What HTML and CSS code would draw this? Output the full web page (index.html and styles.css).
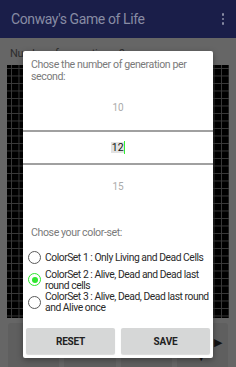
FILE: index.html
```html
<!DOCTYPE html>
<html>
<head>
<meta charset="utf-8">
<link rel="stylesheet" href="styles.css">
</head>
<body>
<div class="screen">
  <header class="appbar">
    <span class="app-title">Conway's Game of Life</span>
    <span class="menu"><i></i><i></i><i></i></span>
  </header>
  <main class="content">
    <div class="gen-label">Number of generations: 0</div>
    <div class="grid"></div>
    <div class="controls">
      <div class="ctrl"></div>
      <div class="ctrl"></div>
      <div class="ctrl"></div>
      <div class="ctrl ctrl-play"><span class="play">&#9654;</span><span class="down">&#9660;</span></div>
    </div>
  </main>

  <div class="dialog">
    <div class="dlg-title">Chose the number of generation per second:</div>
    <div class="picker">
      <div class="pick pick-top">10</div>
      <div class="pick-line"></div>
      <div class="pick pick-mid"><span class="sel">12</span><span class="cursor"></span></div>
      <div class="pick-line"></div>
      <div class="pick pick-bot">15</div>
    </div>
    <div class="dlg-label">Chose your color-set:</div>
    <div class="radios">
      <div class="radio-row"><span class="radio"></span><span class="radio-text">ColorSet 1 : Only Living and Dead Cells</span></div>
      <div class="radio-row"><span class="radio on"></span><span class="radio-text">ColorSet 2 : Alive, Dead and Dead last round cells</span></div>
      <div class="radio-row"><span class="radio"></span><span class="radio-text">ColorSet 3 : Alive, Dead, Dead last round and Alive once</span></div>
    </div>
    <div class="dlg-buttons">
      <button class="btn">RESET</button>
      <button class="btn">SAVE</button>
    </div>
  </div>
</div>
</body>
</html>
```
FILE: styles.css
```css
* { box-sizing: border-box; }
html, body { margin: 0; padding: 0; }
body {
  width: 236px;
  height: 367px;
  overflow: hidden;
  font-family: Roboto, "Liberation Sans", sans-serif;
  background: #666666;
}
.screen {
  position: relative;
  width: 236px;
  height: 367px;
  overflow: hidden;
}
.appbar {
  height: 38px;
  background: #1a1e49;
  display: flex;
  align-items: center;
  justify-content: space-between;
  padding: 0 11px 0 11px;
  box-shadow: 0 1px 2px rgba(0,0,0,0.3);
}
.app-title {
  color: #888ca4;
  font-size: 14px;
  letter-spacing: -0.4px;
}
.menu {
  display: flex;
  flex-direction: column;
  gap: 2px;
  margin-right: 1px;
}
.menu i {
  display: block;
  width: 2.5px;
  height: 2.5px;
  background: #888ca4;
  border-radius: 50%;
}
.content {
  background: #666666;
  padding: 10px 7px 0 7px;
}
.gen-label {
  font-size: 11px;
  letter-spacing: -0.4px;
  color: #2e2e2e;
  padding-left: 3px;
  line-height: 12px;
  height: 17px;
}
.grid {
  width: 222px;
  height: 253px;
  background-color: #000;
  background-image:
    linear-gradient(to right, #3a3a3a 1px, transparent 1px),
    linear-gradient(to bottom, #3a3a3a 1px, transparent 1px);
  background-size: 7.5px 7.5px;
  background-position: 4px 3px;
}
.controls {
  display: flex;
  gap: 5px;
  padding: 5px 1px 0 1px;
}
.ctrl {
  flex: 1;
  height: 48px;
  background: #5f5f5f;
  border-radius: 3px;
  position: relative;
}
.ctrl-play .play {
  position: absolute;
  right: 6px;
  top: 13px;
  color: #111;
  font-size: 11px;
}
.ctrl-play .down {
  position: absolute;
  left: 20px;
  top: 30px;
  color: #111;
  font-size: 9px;
}

/* dialog */
.dialog {
  position: absolute;
  left: 23px;
  top: 51px;
  width: 190px;
  height: 307px;
  background: #ffffff;
  border-radius: 2px;
  box-shadow: 0 2px 6px rgba(0,0,0,0.35);
  padding: 8px 3px 4px 3px;
  display: flex;
  flex-direction: column;
}
.dlg-title {
  font-size: 10.6px;
  letter-spacing: -0.4px;
  line-height: 12px;
  color: #7a7a7a;
  padding: 0 4px 0 5px;
  height: 24px;
}
.picker {
  display: flex;
  flex-direction: column;
  margin: 0 -3px;
}
.pick {
  font-size: 10px;
  line-height: 12px;
  text-align: center;
  color: #ababab;
}
.pick-top {
  height: 47px;
  padding-top: 19px;
}
.pick-line {
  height: 2px;
  background: #a0a0a0;
}
.pick-mid {
  height: 31px;
  display: flex;
  align-items: center;
  justify-content: center;
  color: #111;
  font-size: 10.5px;
}
.sel {
  background: #e2e2e2;
  padding: 0 0 0 1px;
  line-height: 11px;
}
.cursor {
  display: inline-block;
  width: 1.5px;
  height: 13px;
  background: #33ee33;
}
.pick-bot {
  height: 50px;
  padding-top: 16px;
}
.dlg-label {
  font-size: 10.6px;
  letter-spacing: -0.4px;
  line-height: 12px;
  color: #7a7a7a;
  padding-left: 5px;
  margin-top: 12px;
}
.radios {
  display: flex;
  flex-direction: column;
  margin-top: 7px;
}
.radio-row {
  display: flex;
  align-items: center;
  min-height: 22.5px;
  padding-left: 2px;
}
.radio {
  flex: none;
  width: 13px;
  height: 13px;
  border: 1.5px solid #5a5a5a;
  border-radius: 50%;
  margin-right: 4px;
  display: flex;
  align-items: center;
  justify-content: center;
}
.radio.on {
  border-color: #2ee62e;
}
.radio.on::after {
  content: "";
  width: 6px;
  height: 6px;
  border-radius: 50%;
  background: #2ee62e;
}
.radio-text {
  font-size: 10.3px;
  line-height: 11px;
  color: #2a2a2a;
  letter-spacing: -0.45px;
}
.dlg-buttons {
  display: flex;
  gap: 6px;
  margin-top: auto;
}
.btn {
  flex: 1;
  height: 26px;
  border: none;
  border-radius: 2px;
  background: #d6d7d7;
  font-family: Roboto, "Liberation Sans", sans-serif;
  font-weight: bold;
  font-size: 10px;
  letter-spacing: -0.2px;
  color: #222;
  padding: 0;
  box-shadow: 0 1px 1px rgba(0,0,0,0.15);
}
```
